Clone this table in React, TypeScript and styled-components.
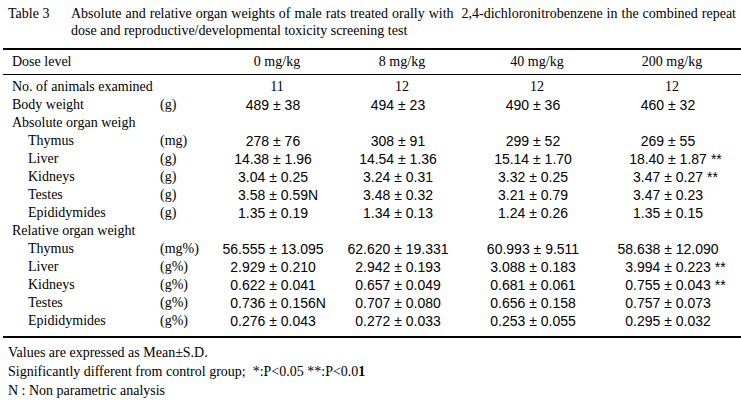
import styled, { createGlobalStyle } from "styled-components";

const GlobalStyle = createGlobalStyle`
  html, body {
    margin: 0;
    padding: 0;
    background: #ffffff;
  }
  body {
    font-family: "Liberation Serif", "Times New Roman", serif;
    font-size: 14px;
    color: #000000;
  }
`;

const Page = styled.div`
  width: 741px;
  height: 400px;
  overflow: hidden;
  padding: 5px 0 0 3px;
  box-sizing: border-box;
`;

const Caption = styled.div`
  display: grid;
  grid-template-columns: 63px 665px;
  padding-left: 5px;
  line-height: 17px;
`;

const CaptionLine = styled.div<{ $justify?: boolean }>`
  white-space: nowrap;
  text-align: ${(p) => (p.$justify ? "justify" : "left")};
  text-align-last: ${(p) => (p.$justify ? "justify" : "left")};
`;

const Table = styled.div`
  margin-top: 9px;
  width: 738px;
  border-top: 2px solid #000;
  border-bottom: 2px solid #000;
`;

const Row = styled.div`
  display: grid;
  grid-template-columns: 157px 55px 124px 126px 144px 126px;
  height: 18px;
  line-height: 18px;
  white-space: nowrap;
`;

const HeadRow = styled(Row)`
  height: 24px;
  line-height: 24px;
  border-bottom: 1px solid #000;
`;

const Body = styled.div`
  padding: 3px 0 6px;
`;

const Label = styled.div<{ $indent?: boolean }>`
  padding-left: ${(p) => (p.$indent ? "25px" : "9px")};
`;

const Unit = styled.div``;

const HeadCell = styled.div`
  text-align: center;
`;

const ValueCell = styled.div`
  text-align: center;
  padding-right: 8px;
  font-family: "Liberation Sans", Arial, sans-serif;
`;

const Value = styled.span`
  position: relative;
  display: inline-block;
`;

const Mark = styled.span<{ $gap: number }>`
  position: absolute;
  left: 100%;
  top: 0;
  margin-left: ${(p) => p.$gap}px;
`;

const Notes = styled.div`
  padding: 5px 0 0 5px;
  line-height: 19px;
`;

const Note = styled.div`
  height: 19px;
  white-space: nowrap;
`;

const doses = ["0 mg/kg", "8 mg/kg", "40 mg/kg", "200 mg/kg"];

type Line = { organ: string; unit: string; values: string[] };

const absolute: Line[] = [
  { organ: "Thymus", unit: "(mg)", values: ["278 ± 76", "308 ± 91", "299 ± 52", "269 ± 55"] },
  { organ: "Liver", unit: "(g)", values: ["14.38 ± 1.96", "14.54 ± 1.36", "15.14 ± 1.70", "18.40 ± 1.87|**"] },
  { organ: "Kidneys", unit: "(g)", values: ["3.04 ± 0.25", "3.24 ± 0.31", "3.32 ± 0.25", "3.47 ± 0.27|**"] },
  { organ: "Testes", unit: "(g)", values: ["3.58 ± 0.59|N", "3.48 ± 0.32", "3.21 ± 0.79", "3.47 ± 0.23"] },
  { organ: "Epididymides", unit: "(g)", values: ["1.35 ± 0.19", "1.34 ± 0.13", "1.24 ± 0.26", "1.35 ± 0.15"] },
];

const relative: Line[] = [
  { organ: "Thymus", unit: "(mg%)", values: ["56.555 ± 13.095", "62.620 ± 19.331", "60.993 ± 9.511", "58.638 ± 12.090"] },
  { organ: "Liver", unit: "(g%)", values: ["2.929 ± 0.210", "2.942 ± 0.193", "3.088 ± 0.183", "3.994 ± 0.223|**"] },
  { organ: "Kidneys", unit: "(g%)", values: ["0.622 ± 0.041", "0.657 ± 0.049", "0.681 ± 0.061", "0.755 ± 0.043|**"] },
  { organ: "Testes", unit: "(g%)", values: ["0.736 ± 0.156|N", "0.707 ± 0.080", "0.656 ± 0.158", "0.757 ± 0.073"] },
  { organ: "Epididymides", unit: "(g%)", values: ["0.276 ± 0.043", "0.272 ± 0.033", "0.253 ± 0.055", "0.295 ± 0.032"] },
];

function Cell({ text }: { text: string }) {
  const [main, mark] = text.split("|");
  return (
    <ValueCell>
      <Value>
        {main}
        {mark && <Mark $gap={mark === "N" ? 0 : 4}>{mark}</Mark>}
      </Value>
    </ValueCell>
  );
}

function DataRow({ line, indent }: { line: Line; indent?: boolean }) {
  return (
    <Row>
      <Label $indent={indent}>{line.organ}</Label>
      <Unit>{line.unit}</Unit>
      {line.values.map((v, i) => (
        <Cell key={i} text={v} />
      ))}
    </Row>
  );
}

export default function App() {
  return (
    <Page>
      <GlobalStyle />
      <Caption>
        <div>Table 3</div>
        <CaptionLine $justify>
          Absolute and relative organ weights of male rats treated orally with&nbsp; 2,4-dichloronitrobenzene in the combined repeat
        </CaptionLine>
        <div />
        <CaptionLine>dose and reproductive/developmental toxicity screening test</CaptionLine>
      </Caption>
      <Table>
        <HeadRow>
          <Label>Dose level</Label>
          <Unit />
          {doses.map((d) => (
            <HeadCell key={d}>{d}</HeadCell>
          ))}
        </HeadRow>
        <Body>
          <Row>
            <Label>No. of animals examined</Label>
            <Unit />
            {["11", "12", "12", "12"].map((n, i) => (
              <HeadCell key={i}>{n}</HeadCell>
            ))}
          </Row>
          <DataRow line={{ organ: "Body weight", unit: "(g)", values: ["489 ± 38", "494 ± 23", "490 ± 36", "460 ± 32"] }} />
          <Row>
            <Label>Absolute organ weigh</Label>
          </Row>
          {absolute.map((l) => (
            <DataRow key={"a" + l.organ} line={l} indent />
          ))}
          <Row>
            <Label>Relative organ weight</Label>
          </Row>
          {relative.map((l) => (
            <DataRow key={"r" + l.organ} line={l} indent />
          ))}
        </Body>
      </Table>
      <Notes>
        <Note>Values are expressed as Mean±S.D.</Note>
        <Note>
          Significantly different from control group;&nbsp; *:P&lt;0.05 **:P&lt;0.0<b>1</b>
        </Note>
        <Note>N : Non parametric analysis</Note>
      </Notes>
    </Page>
  );
}
